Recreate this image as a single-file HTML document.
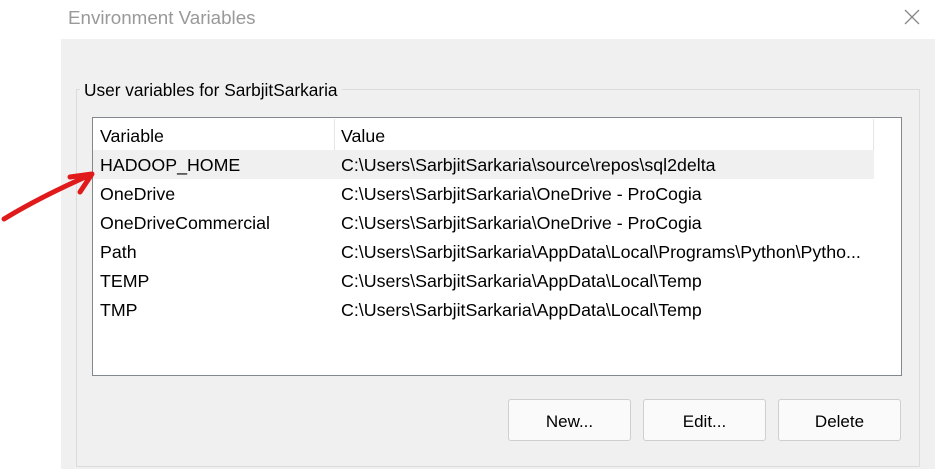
<!DOCTYPE html>
<html><head><style>
body{margin:0;width:935px;height:469px;background:#fff;position:relative;overflow:hidden;font-family:"Segoe UI","Liberation Sans",sans-serif;}
.abs{position:absolute}
.t{font-size:17.8px;color:#000;white-space:nowrap}
.btn{position:absolute;top:399px;width:121px;height:40px;background:#fafafa;border:1px solid #cfcfcf;border-radius:3px;font-size:17px;text-align:center;line-height:43px;color:#000}
</style></head><body>
<div class="abs" style="left:68px;top:7px;font-size:18.8px;color:#999">Environment Variables</div>
<svg class="abs" style="left:903px;top:8px" width="18" height="18"><path d="M2 2L16 16M16 2L2 16" stroke="#888" stroke-width="1.3"/></svg>
<div class="abs" style="left:61px;top:39px;width:874px;height:430px;background:#f0f0f0"></div>
<div class="abs" style="left:76px;top:89px;width:842px;height:376px;border:1px solid #dcdcdc"></div>
<div class="abs t" style="left:80px;top:80px;background:#f0f0f0;padding:0 4px;font-size:17.3px">User variables for SarbjitSarkaria</div>
<div class="abs" style="left:92px;top:117px;width:808px;height:257px;background:#fff;border:1px solid #828790"></div>
<div class="abs" style="left:334px;top:119px;width:1px;height:31px;background:#e5e5e5"></div>
<div class="abs" style="left:873px;top:119px;width:1px;height:31px;background:#e5e5e5"></div>
<div class="abs" style="left:93px;top:150px;width:781px;height:29px;background:#f0f0f0"></div>
<div class="abs t" style="left:100px;top:126px">Variable</div>
<div class="abs t" style="left:341px;top:126px">Value</div>
<div class="abs t" style="left:100px;top:155px">HADOOP_HOME</div><div class="abs t" style="left:341px;top:155px">C:\Users\SarbjitSarkaria\source\repos\sql2delta</div>
<div class="abs t" style="left:100px;top:184px">OneDrive</div><div class="abs t" style="left:341px;top:184px">C:\Users\SarbjitSarkaria\OneDrive - ProCogia</div>
<div class="abs t" style="left:100px;top:213px">OneDriveCommercial</div><div class="abs t" style="left:341px;top:213px">C:\Users\SarbjitSarkaria\OneDrive - ProCogia</div>
<div class="abs t" style="left:100px;top:242px">Path</div><div class="abs t" style="left:341px;top:242px">C:\Users\SarbjitSarkaria\AppData\Local\Programs\Python\Pytho...</div>
<div class="abs t" style="left:100px;top:271px">TEMP</div><div class="abs t" style="left:341px;top:271px">C:\Users\SarbjitSarkaria\AppData\Local\Temp</div>
<div class="abs t" style="left:100px;top:300px">TMP</div><div class="abs t" style="left:341px;top:300px">C:\Users\SarbjitSarkaria\AppData\Local\Temp</div>
<div class="btn" style="left:508px">New...</div>
<div class="btn" style="left:643px">Edit...</div>
<div class="btn" style="left:778px">Delete</div>
<svg class="abs" style="left:0;top:0" width="120" height="240"><path d="M4 219Q40 197 90 175M70 177L92 174L80 192" fill="none" stroke="#e0191b" stroke-width="5" stroke-linecap="round" stroke-linejoin="round"/></svg>
</body></html>
